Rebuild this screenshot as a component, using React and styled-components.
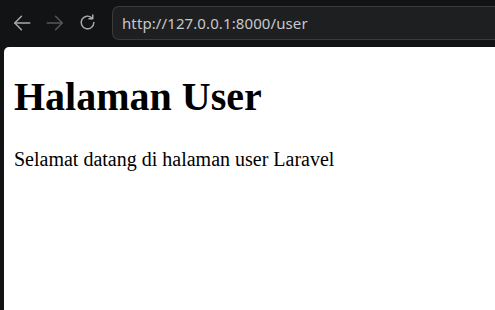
import React from "react";
import styled, { createGlobalStyle } from "styled-components";

const Global = createGlobalStyle`
  html, body { margin: 0; padding: 0; background: #121314; }
  #root { height: 310px; }
`;

const Window = styled.div`
  width: 495px;
  height: 310px;
  display: flex;
  flex-direction: column;
  background: #121314;
  overflow: hidden;
`;

const Toolbar = styled.div`
  height: 47px;
  flex: none;
  display: flex;
  align-items: center;
  padding: 0 0 2px 5px;
  box-sizing: border-box;
`;

const NavButton = styled.div`
  width: 33px;
  height: 33px;
  display: flex;
  align-items: center;
  justify-content: center;
  color: ${(p) => (p.$dim ? "#55585b" : "#a8abad")};
`;

const AddressBar = styled.div`
  margin-left: 8px;
  flex: 1;
  height: 34px;
  box-sizing: border-box;
  border: 1px solid #3a3b3d;
  border-right: none;
  border-radius: 7px 0 0 7px;
  background: #1e1f21;
  display: flex;
  align-items: center;
  padding-left: 9px;
  font-family: "Noto Sans", "Open Sans", sans-serif;
  font-size: 15px;
  color: #c7c8ca;
  letter-spacing: 0.1px;
`;

const Viewport = styled.div`
  flex: 1;
  margin-left: 4px;
  background: #ffffff;
  border-top-left-radius: 5px;
  overflow: hidden;
`;

const Page = styled.div`
  padding: 10px;
  font-family: "Liberation Serif", "Times New Roman", serif;
  color: #000;
`;

const Title = styled.h1`
  font-size: 40px;
  font-weight: bold;
  margin: 17px 0 28px;
  line-height: 46px;
`;

const Text = styled.p`
  font-size: 20px;
  margin: 0;
  line-height: 23px;
`;

const Arrow = ({ dir }) => (
  <svg width="20" height="20" viewBox="0 0 18 18" fill="none" stroke="currentColor" strokeWidth="1.3" strokeLinecap="round" strokeLinejoin="round">
    {dir === "left" ? (
      <>
        <path d="M16 9H2.5" />
        <path d="M8.5 3L2.5 9l6 6" />
      </>
    ) : (
      <>
        <path d="M2 9h13.5" />
        <path d="M9.5 3l6 6-6 6" />
      </>
    )}
  </svg>
);

const Reload = () => (
  <svg width="19" height="19" viewBox="0 0 18 18" fill="none" stroke="currentColor" strokeWidth="1.4" strokeLinecap="round" strokeLinejoin="round">
    <path d="M15 9a6 6 0 1 1-1.9-4.4" />
    <path d="M14 1.8v3.6h-3.6" />
  </svg>
);

export default function App() {
  return (
    <Window>
      <Global />
      <Toolbar>
        <NavButton><Arrow dir="left" /></NavButton>
        <NavButton $dim><Arrow dir="right" /></NavButton>
        <NavButton><Reload /></NavButton>
        <AddressBar>http://127.0.0.1:8000/user</AddressBar>
      </Toolbar>
      <Viewport>
        <Page>
          <Title>Halaman User</Title>
          <Text>Selamat datang di halaman user Laravel</Text>
        </Page>
      </Viewport>
    </Window>
  );
}
